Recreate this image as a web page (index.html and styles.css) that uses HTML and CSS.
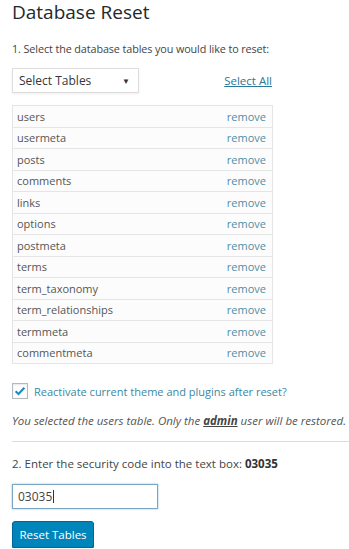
FILE: index.html
```html
<!DOCTYPE html>
<html>
<head>
<meta charset="utf-8">
<link rel="stylesheet" href="styles.css">
</head>
<body>
<div class="wrap">
  <h1 class="title">Database Reset</h1>
  <p class="step step1">1. Select the database tables you would like to reset:</p>
  <div class="select-row">
    <div class="select">Select Tables<span class="caret">▼</span></div>
    <a class="select-all" href="#">Select All</a>
  </div>
  <ul class="tables">
    <li><span>users</span><a href="#">remove</a></li>
    <li><span>usermeta</span><a href="#">remove</a></li>
    <li><span>posts</span><a href="#">remove</a></li>
    <li><span>comments</span><a href="#">remove</a></li>
    <li><span>links</span><a href="#">remove</a></li>
    <li><span>options</span><a href="#">remove</a></li>
    <li><span>postmeta</span><a href="#">remove</a></li>
    <li><span>terms</span><a href="#">remove</a></li>
    <li><span>term_taxonomy</span><a href="#">remove</a></li>
    <li><span>term_relationships</span><a href="#">remove</a></li>
    <li><span>termmeta</span><a href="#">remove</a></li>
    <li><span>commentmeta</span><a href="#">remove</a></li>
  </ul>
  <label class="check">
    <span class="box"><svg viewBox="0 0 16 16" width="14" height="14"><path d="M3 8.2 L6.3 11.5 L13 4.2" fill="none" stroke="#1e8cbe" stroke-width="2.4"/></svg></span>
    <span class="check-label">Reactivate current theme and plugins after reset?</span>
  </label>
  <p class="note">You selected the users table. Only the <b>admin</b> user will be restored.</p>
  <hr class="rule">
  <p class="step step2">2. Enter the security code into the text box: <b>03035</b></p>
  <div class="input">03035<span class="cursor"></span></div>
  <button class="btn">Reset Tables</button>
</div>
</body>
</html>
```
FILE: styles.css
```css
html, body { margin: 0; padding: 0; background: #fff; }
body { font-family: "Open Sans", "Noto Sans", sans-serif; color: #444; }
.wrap { padding: 0 0 0 12px; }
.title { margin: 0; font-weight: 400; font-size: 19px; line-height: 24px; color: #23282d; }
.step { margin: 17px 0 0; font-size: 11.5px; line-height: 16px; color: #444; }
.step1 { font-size: 10.8px; letter-spacing: -0.1px; }
.step b { color: #333; }
.select-row { display: flex; align-items: center; width: 260px; justify-content: space-between; margin-top: 11px; }
.select { box-sizing: border-box; width: 127px; height: 25px; border: 1px solid #ddd; box-shadow: 0 1px 2px rgba(0,0,0,.07); display: flex; align-items: center; justify-content: space-between; padding: 0 8px 0 6px; font-size: 12px; color: #32373c; }
.caret { font-size: 8px; color: #333; }
.select-all { font-size: 11.5px; color: #2a7796; text-decoration: underline; }
.tables { list-style: none; margin: 12px 0 0; padding: 0; width: 259px; border: 1px solid #e5e5e5; border-bottom: none; }
.tables li { box-sizing: border-box; height: 21.5px; border-bottom: 1px solid #e5e5e5; display: flex; align-items: center; justify-content: space-between; padding: 0 6px 0 4px; font-size: 11px; background: #fcfcfc; color: #555; }
.tables a { color: #4f8ea6; text-decoration: none; }
.check { display: flex; align-items: center; margin-top: 19px; gap: 6px; }
.box { box-sizing: border-box; width: 16px; height: 16px; border: 1px solid #b4b9be; box-shadow: inset 0 1px 2px rgba(0,0,0,.1); display: flex; align-items: center; justify-content: center; }
.check-label { font-size: 11px; color: #3a87a4; }
.note { margin: 14px 0 0; font-size: 11.5px; font-style: italic; color: #555; line-height: 16px; }
.note b { text-decoration: underline; color: #444; }
.rule { margin: 12px 0 0; border: none; border-top: 1px solid #ddd; height: 0; }
.step2 { margin-top: 14px; }
.input { box-sizing: border-box; width: 146px; height: 25px; margin-top: 12px; border: 1px solid #7aa6c2; box-shadow: 0 0 2px rgba(30,140,190,.5); display: flex; align-items: center; padding: 0 5px; font-size: 12px; color: #444; }
.cursor { display: inline-block; width: 1px; height: 13px; background: #333; margin-left: 1px; }
.btn { display: block; margin-top: 12px; box-sizing: border-box; width: 82px; height: 27px; background: #0085ba; border: 1px solid #006799; border-radius: 3px; color: #fff; font-family: "Open Sans", "Noto Sans", sans-serif; font-size: 11.5px; padding: 0; box-shadow: 0 1px 0 #006799; }
```
